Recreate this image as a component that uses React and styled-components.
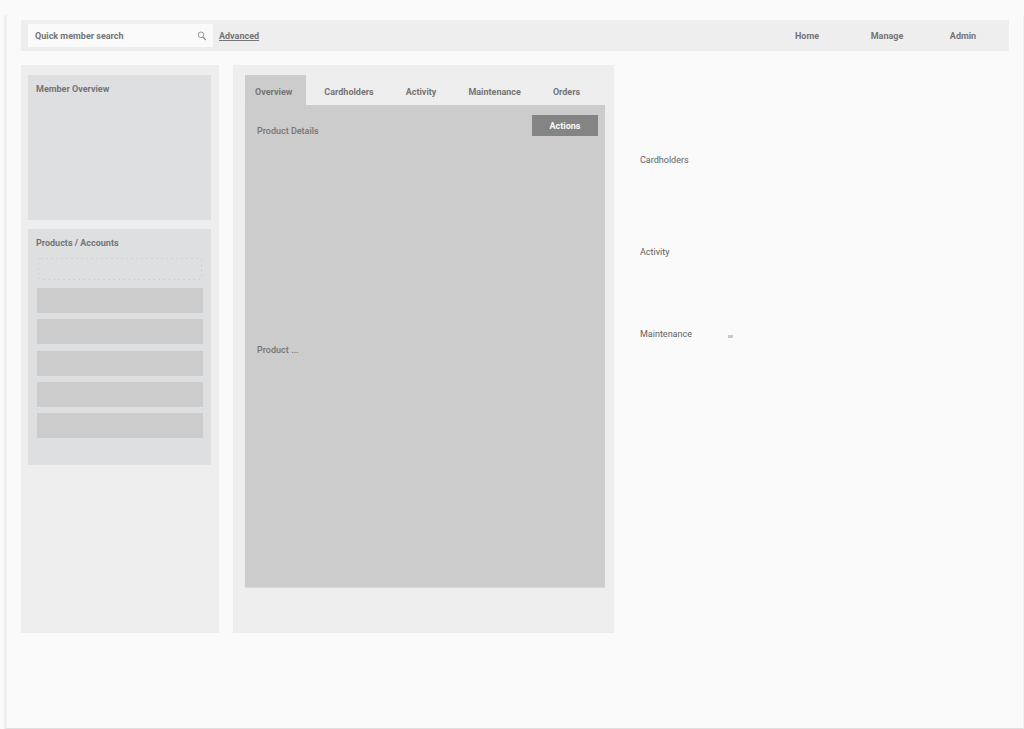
import React from 'react';
import styled, { createGlobalStyle } from 'styled-components';

const GlobalStyle = createGlobalStyle`
  * {
    box-sizing: border-box;
  }
  body {
    margin: 0;
    background: #fafafa;
    color: #757575;
    font-family: Roboto, 'Liberation Sans', sans-serif;
    font-size: 9px;
    line-height: 12px;
  }
  button, input {
    font: inherit;
    color: inherit;
    border: 0;
    padding: 0;
    margin: 0;
  }
  h2, h3, ul {
    margin: 0;
    padding: 0;
    font-size: inherit;
    list-style: none;
  }
`;

const Page = styled.div`
  display: flex;
  min-height: 100vh;
  padding: 15px 0 0 4px;
`;

const Sheet = styled.div`
  flex: 1;
  padding: 5px 14px 14px;
  border-left: 3px solid #f0f0f0;
  border-right: 1px solid #eeeeee;
  border-bottom: 1px solid #dedede;
`;

const Header = styled.header`
  display: flex;
  align-items: center;
  gap: 6px;
  height: 31px;
  padding: 0 8px 0 7px;
  background: #eeeeee;
  font-weight: 700;
`;

const SearchBox = styled.label`
  display: flex;
  align-items: center;
  width: 185px;
  height: 23px;
  padding: 0 6px 0 7px;
  background: #fafafa;
`;

const SearchInput = styled.input`
  flex: 1;
  min-width: 0;
  background: transparent;
  outline: none;

  &::placeholder {
    color: inherit;
    opacity: 1;
  }
`;

const AdvancedLink = styled.a`
  color: inherit;
  text-decoration: underline;
`;

const Nav = styled.nav`
  display: grid;
  grid-template-columns: 84px 76px 76px;
  margin-left: auto;
  text-align: center;
`;

const NavLink = styled.a`
  color: inherit;
  text-decoration: none;
`;

const Columns = styled.main`
  display: grid;
  grid-template-columns: 198px minmax(0, 1fr) minmax(0, 1fr);
  gap: 14px;
  margin-top: 14px;
`;

const Sidebar = styled.aside`
  display: flex;
  flex-direction: column;
  gap: 9px;
  min-height: 568px;
  padding: 10px 8px 10px 7px;
  background: #eeeeee;
`;

const Card = styled.section`
  min-height: ${({ $height }) => $height}px;
  padding: 8px;
  background: #dedfe1;
`;

const CardTitle = styled.h2`
  font-weight: 700;
`;

const EmptySlot = styled.svg`
  display: block;
  width: 100%;
  height: 22px;
  margin: 9px 0 8px;
`;

const ProductList = styled.ul`
  display: flex;
  flex-direction: column;
  justify-content: space-between;
  min-height: 150px;
  margin-left: 1px;
`;

const ProductRow = styled.li`
  height: 25px;
  background: #cccccc;
`;

const Workspace = styled.section`
  padding: 10px 9px 46px 12px;
  background: #eeeeee;
`;

const Tabs = styled.div`
  display: flex;
`;

const Tab = styled.button`
  height: 30px;
  padding: ${({ $active }) => ($active ? '3px 14px 0 10px' : '3px 16px 0')};
  margin-right: ${({ $active }) => ($active ? 2 : 0)}px;
  background: ${({ $active }) => ($active ? '#cccccc' : 'transparent')};
  font-weight: 700;
  cursor: pointer;
`;

const Panel = styled.div`
  display: flex;
  justify-content: space-between;
  align-items: flex-start;
  min-height: 482px;
  padding: 10px 7px 10px 12px;
  background: #cccccc;
  box-shadow: 0 1px 1px #dadada;
`;

const PanelBlock = styled.div`
  height: 219px;
  padding-top: 10px;
`;

const PanelTitle = styled.h3`
  font-weight: 500;
`;

const ActionsButton = styled.button`
  width: 66px;
  height: 21px;
  background: #848484;
  color: #fafafa;
  font-weight: 700;
  cursor: pointer;
`;

const Notes = styled.ul`
  padding: 89px 0 0 12px;
  color: #616161;
`;

const Note = styled.li`
  display: flex;
  align-items: center;
  gap: 36px;
  height: 12px;
  margin-bottom: ${({ $space }) => $space}px;
`;

const Mark = styled.span`
  width: 5px;
  height: 3px;
  margin-top: 5px;
  background: #c8c8c8;
`;

const navItems = ['Home', 'Manage', 'Admin'];
const tabs = ['Overview', 'Cardholders', 'Activity', 'Maintenance', 'Orders'];
const products = [1, 2, 3, 4, 5];
const notes = [
  { text: 'Cardholders', space: 80 },
  { text: 'Activity', space: 70 },
  { text: 'Maintenance', space: 0, mark: true },
];

const SearchIcon = () => (
  <svg width='10' height='10' viewBox='0 0 10 10' fill='none' stroke='#8c8c8c' aria-hidden='true'>
    <circle cx='4' cy='3.8' r='2.8' strokeWidth='0.9' />
    <path d='M6 6L8.8 9.2' strokeWidth='1.2' />
  </svg>
);

const TopBar = () => (
  <Header>
    <SearchBox>
      <SearchInput type='text' placeholder='Quick member search' aria-label='Quick member search' />
      <SearchIcon />
    </SearchBox>
    <AdvancedLink href='#advanced'>Advanced</AdvancedLink>
    <Nav>
      {navItems.map((item) => (
        <NavLink key={item} href={`#${item.toLowerCase()}`}>
          {item}
        </NavLink>
      ))}
    </Nav>
  </Header>
);

const App = () => {
  return (
    <Page>
      <GlobalStyle />
      <Sheet>
        <TopBar />
        <Columns>
          <Sidebar>
            <Card $height={145}>
              <CardTitle>Member Overview</CardTitle>
            </Card>
            <Card $height={236}>
              <CardTitle>Products / Accounts</CardTitle>
              {/* dotted placeholder above the product rows */}
              <EmptySlot viewBox='0 0 167 22' fill='none' stroke='#c4c4c4' aria-hidden='true'>
                <rect x='2.5' y='0.5' width='163' height='21' rx='3' strokeDasharray='1 4' />
              </EmptySlot>
              <ProductList>
                {products.map((id) => (
                  <ProductRow key={id} />
                ))}
              </ProductList>
            </Card>
          </Sidebar>

          <Workspace>
            <Tabs role='tablist'>
              {tabs.map((tab, i) => (
                <Tab key={tab} type='button' role='tab' aria-selected={i === 0} $active={i === 0}>
                  {tab}
                </Tab>
              ))}
            </Tabs>
            <Panel role='tabpanel'>
              <div>
                <PanelBlock>
                  <PanelTitle>Product Details</PanelTitle>
                </PanelBlock>
                <PanelBlock>
                  <PanelTitle>Product ...</PanelTitle>
                </PanelBlock>
              </div>
              <ActionsButton type='button'>Actions</ActionsButton>
            </Panel>
          </Workspace>

          <Notes>
            {notes.map(({ text, space, mark }) => (
              <Note key={text} $space={space}>
                {text}
                {mark && <Mark />}
              </Note>
            ))}
          </Notes>
        </Columns>
      </Sheet>
    </Page>
  );
};

export default App;
